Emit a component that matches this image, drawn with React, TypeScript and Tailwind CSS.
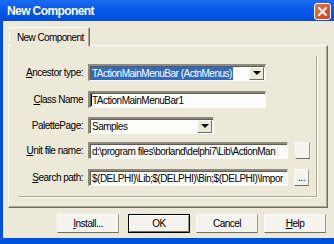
const font = "font-['Liberation_Sans',Arial,sans-serif]";
const txt = "text-[10px] tracking-[-0.5px]";

function Sunken({ width, children }: { width: string; children?: React.ReactNode }) {
  return (
    <div
      className={`${width} h-full flex items-center overflow-hidden bg-[#FDFDFB] border-t-2 border-l-2 border-t-[#8E8B7E] border-l-[#8E8B7E] border-b border-r border-b-[#FFFFFF] border-r-[#FFFFFF] shadow-[inset_1px_1px_0_#5E5C53]`}
    >
      {children}
    </div>
  );
}

function DropButton() {
  return (
    <div className="ml-auto mr-[1px] w-[15px] h-[13px] shrink-0 flex items-center justify-center bg-[#ECE9D8] border border-t-[#FFFFFF] border-l-[#FFFFFF] border-r-[#716F64] border-b-[#716F64]">
      <div className="w-0 h-0 border-l-[4px] border-r-[4px] border-t-[4px] border-l-transparent border-r-transparent border-t-black" />
    </div>
  );
}

function Btn({ label, isDefault, width = "w-[62px]", className = "" }: { label: React.ReactNode; isDefault?: boolean; width?: string; className?: string }) {
  return (
    <div className={`${width} h-full shrink-0 ${isDefault ? "border border-black" : ""} ${className}`}>
      <div className={`w-full h-full flex items-center justify-center whitespace-nowrap ${txt} text-black bg-[#F4F3EE] border border-t-[#FFFFFF] border-l-[#FFFFFF] border-r-[#9D9A8D] border-b-[#716F64]`}>
        {label}
      </div>
    </div>
  );
}

function Row({ label, mt, children }: { label: React.ReactNode; mt: string; children: React.ReactNode }) {
  return (
    <div className={`flex h-[17px] ${mt}`}>
      <div className={`w-[64px] shrink-0 flex items-center justify-end ${txt} text-black whitespace-nowrap`}>{label}</div>
      <div className="ml-[5px] flex h-full items-center">{children}</div>
    </div>
  );
}

export default function App() {
  return (
    <div className={`w-[334px] h-[244px] flex flex-col overflow-hidden bg-[#0050DE] ${font}`}>
      {/* title bar */}
      <div className="h-[21px] shrink-0 flex items-center bg-gradient-to-b from-[#1C6CF2] via-[#0457E6] to-[#0250DC]">
        <span className="ml-[7px] text-[12px] font-bold text-white tracking-[-0.6px]">New Component</span>
        <div className="ml-auto mr-[3px] mt-[1px] w-[17px] h-[17px] rounded-[3px] border border-white bg-gradient-to-br from-[#E8704A] to-[#D5421C] flex items-center justify-center">
          <svg width="9" height="9" viewBox="0 0 9 9">
            <path d="M1 1L8 8M8 1L1 8" stroke="#fff" strokeWidth="2" strokeLinecap="square" />
          </svg>
        </div>
      </div>

      {/* client area */}
      <div className="flex-1 ml-[3px] mb-[6px] bg-[#ECE9D8] flex flex-col">
        {/* page control */}
        <div className="mt-[6px] ml-[5px] w-[320px] flex flex-col">
          <div className={`ml-[1px] w-[81px] h-[19px] -mb-px relative z-10 bg-[#ECE9D8] border-t border-l border-t-white border-l-white border-r border-r-[#716F64] shadow-[inset_-1px_0_0_#ACA899] flex items-center pl-[7px] whitespace-nowrap text-[10px] tracking-[-0.6px] text-black`}>
            New Component
          </div>
          <div className="h-[163px] border border-t-white border-l-white border-r-[#716F64] border-b-[#716F64] shadow-[inset_-1px_-1px_0_#ACA899]">
            {/* bevel */}
            <div className="ml-[10px] mt-[10px] w-[298px] h-[141px] border-r border-b border-r-[#ACA899] border-b-[#ACA899] shadow-[1px_1px_0_#FFFFFF] flex flex-col">
              <Row label={<span><u>A</u>ncestor type:</span>} mt="mt-[8px]">
                <Sunken width="w-[178px]">
                  <span className={`ml-[1px] h-[13px] flex items-center bg-[#316AC5] text-white ${txt} pl-[1px] pr-[1px] whitespace-nowrap`}>
                    TActionMainMenuBar (ActnMenus)
                  </span>
                  <DropButton />
                </Sunken>
              </Row>
              <Row label={<span><u>C</u>lass Name</span>} mt="mt-[10px]">
                <Sunken width="w-[178px]">
                  <span className="ml-[1px] w-px h-[12px] bg-black" />
                  <span className={`${txt} text-black whitespace-nowrap`}>TActionMainMenuBar1</span>
                </Sunken>
              </Row>
              <Row label={<span>PalettePage:</span>} mt="mt-[9px]">
                <Sunken width="w-[126px]">
                  <span className={`ml-[2px] ${txt} text-black whitespace-nowrap`}>Samples</span>
                  <DropButton />
                </Sunken>
              </Row>
              <Row label={<span><u>U</u>nit file name:</span>} mt="mt-[8px]">
                <Sunken width="w-[200px]">
                  <span className={`ml-[2px] ${txt} text-black whitespace-nowrap`}>d:\program files\borland\delphi7\Lib\ActionMan</span>
                </Sunken>
                <Btn label="" width="w-[15px]" className="ml-[7px] h-[18px]" />
              </Row>
              <Row label={<span><u>S</u>earch path:</span>} mt="mt-[10px]">
                <Sunken width="w-[200px]">
                  <span className={`ml-[2px] ${txt} text-black whitespace-nowrap`}>$(DELPHI)\Lib;$(DELPHI)\Bin;$(DELPHI)\Impor</span>
                </Sunken>
                <Btn label="..." width="w-[15px]" className="ml-[6px] h-[19px]" />
              </Row>
            </div>
          </div>
        </div>

        {/* buttons */}
        <div className="mt-[6px] h-[19px] flex">
          <Btn label={<span><u>I</u>nstall...</span>} className="ml-[54px]" />
          <Btn label="OK" isDefault className="ml-[9px]" />
          <Btn label="Cancel" className="ml-[6px]" />
          <Btn label={<span><u>H</u>elp</span>} className="ml-[6px]" />
        </div>
      </div>
    </div>
  );
}
